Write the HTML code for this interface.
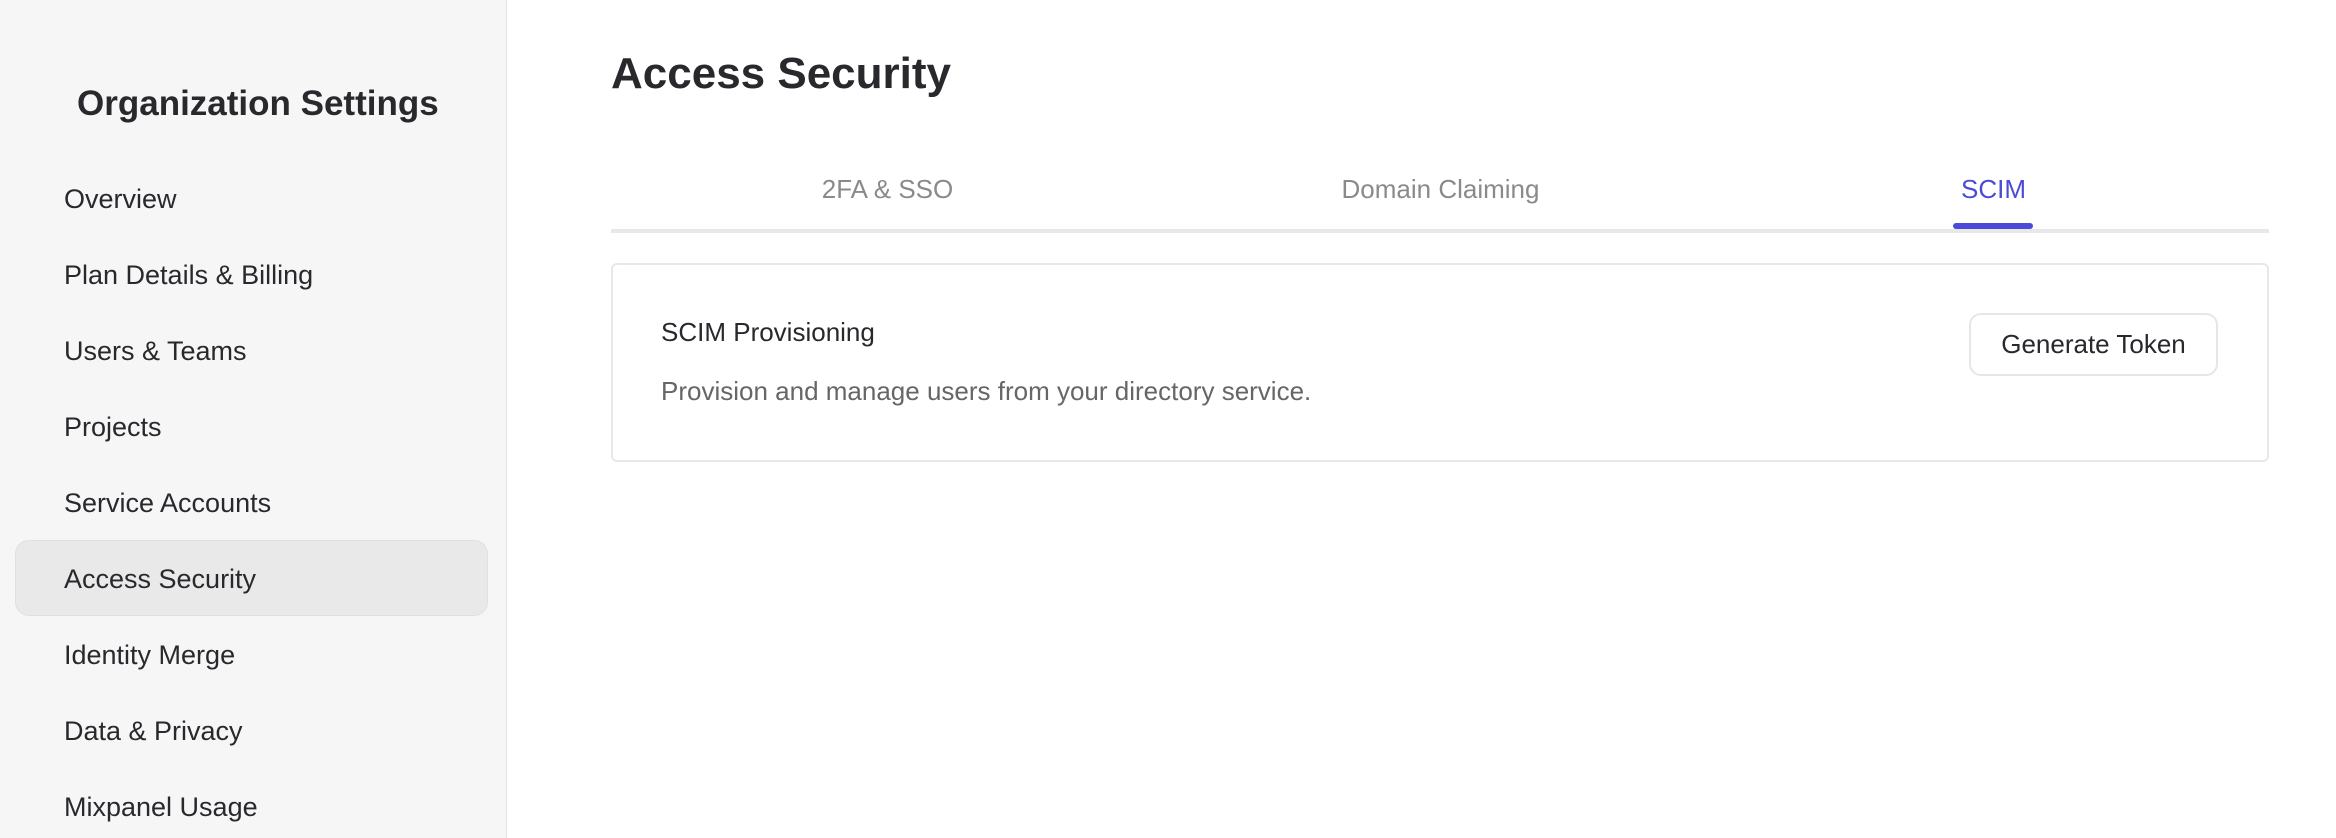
<!DOCTYPE html>
<html><head><meta charset="utf-8"><style>
*{margin:0;padding:0;box-sizing:border-box}
body{width:2336px;height:838px;overflow:hidden;background:#fff;font-family:"Liberation Sans",sans-serif;color:#28282d;position:relative}
.side{position:absolute;left:0;top:0;width:507px;height:838px;background:#f6f6f6;border-right:1px solid #e4e4e4}
.abs{position:absolute;white-space:nowrap;line-height:1}
.nav{font-size:27px;left:64px;color:#28282d}
.active{position:absolute;left:15px;top:540px;width:473px;height:76px;background:#e9e9e9;border:1px solid #e0e0e0;border-radius:14px}
.tab{font-size:26px;color:#8a8a8a;width:553px;text-align:center;top:176px}
</style></head><body>
<div class="side">
<div class="abs" style="left:77px;top:86px;font-size:35px;font-weight:bold">Organization Settings</div>
<div class="active"></div>
<div class="abs nav" style="top:186px">Overview</div>
<div class="abs nav" style="top:262px">Plan Details &amp; Billing</div>
<div class="abs nav" style="top:338px">Users &amp; Teams</div>
<div class="abs nav" style="top:414px">Projects</div>
<div class="abs nav" style="top:490px">Service Accounts</div>
<div class="abs nav" style="top:566px">Access Security</div>
<div class="abs nav" style="top:642px">Identity Merge</div>
<div class="abs nav" style="top:718px">Data &amp; Privacy</div>
<div class="abs nav" style="top:794px">Mixpanel Usage</div>
</div>
<div class="abs" style="left:611px;top:52px;font-size:44px;font-weight:bold">Access Security</div>
<div class="abs tab" style="left:611px">2FA &amp; SSO</div>
<div class="abs tab" style="left:1164px">Domain Claiming</div>
<div class="abs tab" style="left:1717px;color:#4b4bd8">SCIM</div>
<div style="position:absolute;left:611px;top:229px;width:1658px;height:4px;background:#e8e8e8"></div>
<div style="position:absolute;left:1953px;top:223px;width:80px;height:6px;background:#4b4bd8;border-radius:3px"></div>
<div style="position:absolute;left:611px;top:263px;width:1658px;height:199px;border:2px solid #e8e8e8;border-radius:6px"></div>
<div class="abs" style="left:661px;top:319px;font-size:26px;color:#28282d">SCIM Provisioning</div>
<div class="abs" style="left:661px;top:378px;font-size:26px;color:#666">Provision and manage users from your directory service.</div>
<div style="position:absolute;left:1969px;top:313px;width:249px;height:63px;border:2px solid #e6e6e6;border-radius:12px;font-size:26px;line-height:59px;text-align:center;color:#28282d">Generate Token</div>
</body></html>
